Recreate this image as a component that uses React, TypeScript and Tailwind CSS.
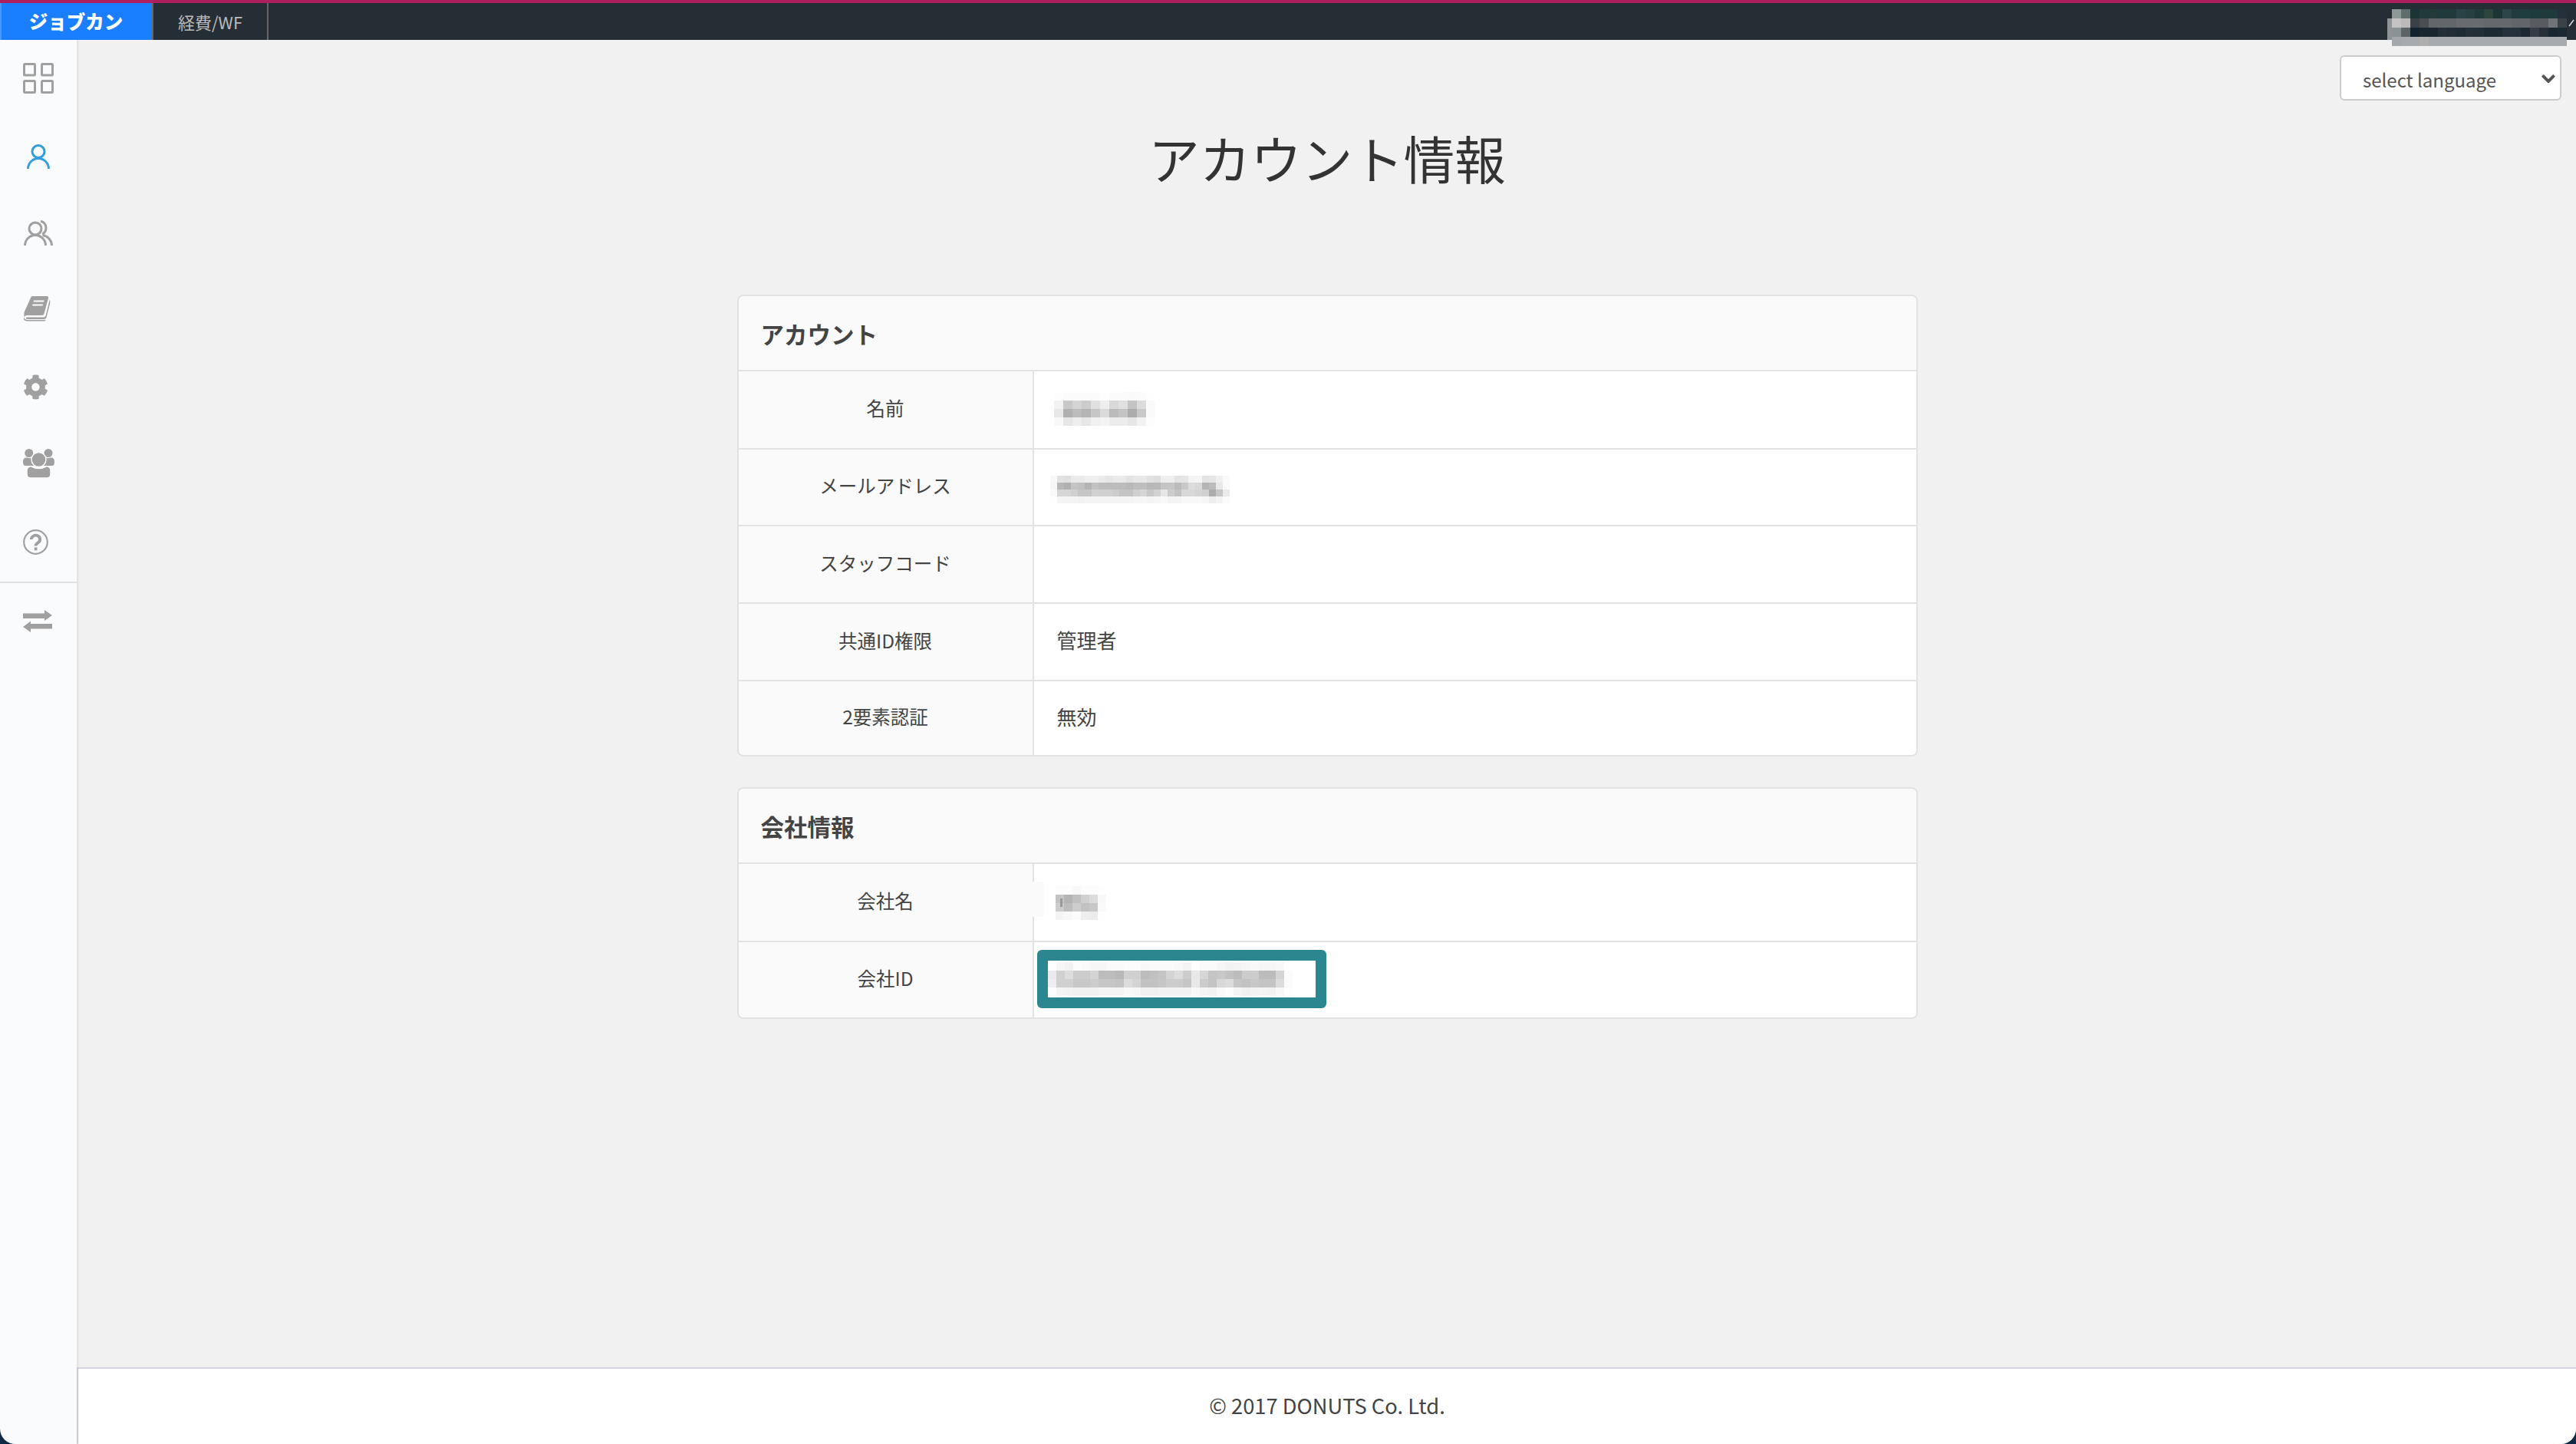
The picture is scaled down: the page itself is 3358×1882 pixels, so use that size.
import { ReactNode } from 'react'
import { FaCog } from 'react-icons/fa'

const gray = (v: string) => (v.length === 2 ? `#${v}${v}${v}` : `#${v}`)

// Pixelated blocks standing in for the blurred-out personal data
function Mosaic({ rows, cell, rowH, className, children }: { rows: string[]; cell: number; rowH: number; className?: string; children?: ReactNode }) {
  const grid = rows.map((r) => r.split(' '))
  const cols = Math.max(...grid.map((r) => r.length))
  return (
    <svg className={className} width={cols * cell} height={grid.length * rowH} shapeRendering="crispEdges">
      {grid.map((r, y) =>
        r.map((v, x) => <rect key={`${y}-${x}`} x={x * cell} y={y * rowH} width={cell} height={rowH} fill={gray(v)} />),
      )}
      {children}
    </svg>
  )
}

const nameBlocks = [
  'fd fb fb fb fb fe fb fb fa fb fe',
  'f2 c8 d4 cc e0 ee d8 e0 c4 dc fa',
  'e8 b0 bc b4 c6 da ba c4 ac c8 fa',
  'f8 e6 ee e6 f0 f4 ec ec e6 f2 fd',
]
const mailBlocks = [
  'f8 e2 e0 ea ea ee ee ea e6 ea ea e4 e8 e8 e2 de ee ee e4 e6 f4 f6 e4 e6 f0 fa',
  'f6 b8 b0 c4 c0 b4 c2 bc bc bc bc b8 be be b8 b8 c4 c6 bc c8 dc d8 b4 bc e8 fa',
  'fa d6 d6 d0 c6 c6 d2 d0 d0 cc c4 c4 d0 d6 c8 d2 e6 cc c2 d8 d8 d4 d0 ac c6 ea',
  'fe f4 f4 f4 f2 f4 f4 f4 f4 f4 f4 f4 f6 f6 f4 f6 f8 f4 f4 f8 f8 f8 f6 ee f4 fa',
]
const companyBlocks = ['fc fc f8 fc fc fe', 'c4 b4 c0 d0 dc f8', 'cc bc cc c2 c8 fa', 'f4 f8 fc ee ec fe']
const idBlocks = [
  'fe f6 f2 fc fa f6 f6 fa fa fc fc f8 fa fa fa f8 f4 fe fa fa f6 f2 f4 f6 f8 f6 f6 f8 ff',
  'ea d0 dc cc cc d4 bc bc b8 d0 d0 bc c0 c4 d4 dc cc e8 d6 c4 c8 c2 bc cc cc bc bc d4 fb',
  'ee d0 d0 c8 c8 cc c6 c6 c4 dc d4 c2 c2 c6 cc cc c6 e8 cc c4 d8 dc c6 c2 c8 c4 c4 dc fb',
  'fc f4 f2 f0 f0 f0 f4 f4 f4 f8 f6 f0 f0 f2 f2 f2 f2 f8 f4 f2 f8 fc f4 f0 f2 f4 f2 f8 fe',
]
const userBlocks = [
  '8e9896 5f6d6c 1c3436 1f3a3a 233b37 1e3a3a 1f3a3a 2a4245 26403f 1f3a3a 2c443d 1c3436 2a4648 223c3e 1f3c3e 1e3a3a 1e3a3a 1e3a3a 25303a',
  'c4c2c2 bababa 3a4248 4a4e50 62686a 62686a 62686a 686c6e 686c6e 686c6e 66696c 66696c 66696c 62666a 62666a 585c60 585c60 707478 3a4248',
  '8a9296 5c6468 13232b 1a262e 1a262e 252f37 222c34 1f2b32 252f37 242e36 1e2a32 1e2a32 26303a 26303a 1e2830 343c44 282f37 1a2630 1a2a30',
  'a4a8aa a8abad a8abad aeaeae a8abad a8abad a8abad a8abad a8abad a8abad a8abad a8abad a8abad a8abad a8abad a8abad a8abad a8abad a8abad',
]

function GridIcon() {
  return (
    <svg width="40" height="40" viewBox="0 0 40 40" fill="none" stroke="#a0a0a0" strokeWidth="3">
      <rect x="1.5" y="1.5" width="14" height="14.5" rx="1" />
      <rect x="24.5" y="1.5" width="14" height="14.5" rx="1" />
      <rect x="1.5" y="23.5" width="14" height="15" rx="1" />
      <rect x="24.5" y="23.5" width="14" height="15" rx="1" />
    </svg>
  )
}

function PersonIcon() {
  return (
    <svg width="30" height="32" viewBox="0 0 30 32" fill="none" stroke="#349ddb" strokeWidth="3" className="ml-[5px]">
      <circle cx="15" cy="9.5" r="8" />
      <path d="M1.5 32a13.5 13.5 0 0 1 27 0" />
    </svg>
  )
}

function PeopleIcon() {
  return (
    <svg width="38" height="33" viewBox="0 0 38 33" fill="none" stroke="#a0a0a0" strokeWidth="3" className="ml-px">
      <circle cx="15" cy="11" r="8" />
      <path d="M1.5 33a13.5 13.5 0 0 1 27 0" />
      <path d="M22 1.2a9 9 0 0 1 2 16.8" />
      <path d="M24.5 19.5a14 14 0 0 1 12 13.5" />
    </svg>
  )
}

function BookIcon() {
  return (
    <svg width="36" height="33" viewBox="0 0 36 33" fill="#a0a0a0">
      <path d="M10 2Q10.5 0 13 0H31Q33.5 0 33 2.500L27.500 23Q27 25 24.500 25H5Q3 25 1.500 27Q1 22 2 20Z" />
      <path d="M34.800 4.500 29.500 25.500Q29 27.500 26.500 27.500H6Q3.700 27.500 3.700 29Q3.700 30 6 30H27Q29.800 30 30.500 27.800L35.200 9.500Q35.800 7 34.800 4.500Z" />
      <path d="M1 27Q0 32 5 32.500H27Q29 32.500 30 31H6Q2 31 1 27Z" />
      <path fill="#fafbfd" d="M14 5.500H27.500L27 7.500H13.500ZM12.500 10.500H26L25.500 12.500H12Z" />
    </svg>
  )
}

function TeamIcon() {
  return (
    <svg width="41" height="38" viewBox="0 0 41 38" fill="#a0a0a0">
      <circle cx="7.800" cy="5.500" r="5.500" />
      <circle cx="33" cy="5.500" r="5.500" />
      <path d="M0 17Q0 11 5 11.500Q9 13 13 11.500L16 22H3Q0 22 0 17Z" />
      <path d="M41 17Q41 11 36 11.500Q32 13 28 11.500L25 22H38Q41 22 41 17Z" />
      <circle cx="20.500" cy="14" r="9.500" stroke="#fafbfd" strokeWidth="1.500" />
      <path d="M5 28Q5 24 10 22.500Q15 25.500 20.500 25.500Q26 25.500 31 22.500Q36 24 36 28V33Q36 38 31 38H10Q5 38 5 33Z" stroke="#fafbfd" strokeWidth="1.500" />
    </svg>
  )
}

function HelpIcon() {
  return (
    <svg width="33" height="33" viewBox="0 0 33 33" fill="none" stroke="#a0a0a0">
      <circle cx="16.500" cy="16.500" r="15.300" strokeWidth="2.200" />
      <path d="M10.800 13a5.700 5.200 0 1 1 9 4.200c-2 1.400-3.300 2-3.300 4.300" strokeWidth="3.800" />
      <rect x="14.700" y="23.500" width="3.800" height="3.800" fill="#a0a0a0" stroke="none" />
    </svg>
  )
}

function SwapIcon() {
  return (
    <svg width="38" height="29" viewBox="0 0 38 29" fill="#a0a0a0">
      <path d="M0 4.500H28V0L38 7 28 14V11H0Z" />
      <path d="M38 18H10V14.500L0 22 10 29V24.500H38Z" />
    </svg>
  )
}

const topItems: { icon: ReactNode; rowClass: string }[] = [
  { icon: <GridIcon />, rowClass: 'h-[100px]' },
  { icon: <PersonIcon />, rowClass: 'h-[104px]' },
  { icon: <PeopleIcon />, rowClass: 'h-[94px]' },
  { icon: <BookIcon />, rowClass: 'h-[104px]' },
  { icon: <FaCog size={33} color="#a0a0a0" />, rowClass: 'h-[100px]' },
  { icon: <TeamIcon />, rowClass: 'h-[100px]' },
  { icon: <HelpIcon />, rowClass: 'h-[104px]' },
]

function Sidebar() {
  return (
    <aside className="z-10 flex w-[100px] shrink-0 flex-col bg-[#fafbfd] shadow-[2px_0_3px_rgba(0,0,0,0.08)]">
      {topItems.map((item, i) => (
        <div key={i} className={`flex items-center pl-[30px] ${item.rowClass}`}>
          {item.icon}
        </div>
      ))}
      <div className="flex h-[100px] items-center border-t-2 border-[#e0e0e0] pl-[30px]">
        <SwapIcon />
      </div>
    </aside>
  )
}

function Header() {
  return (
    <header className="relative flex h-[52px] shrink-0 items-stretch border-t-4 border-[#ae1f5e] bg-[#262e35]">
      <div className="flex w-[200px] items-center justify-center border-r-2 border-l-2 border-r-[#666] border-l-[#4c96ff] bg-[#1a7fff] pr-[2px] text-[24.5px] font-black text-white">
        ジョブカン
      </div>
      <div className="flex w-[150px] items-center justify-center border-r-2 border-[#666] text-[22px] text-[#bbb]">
        経費/WF
      </div>
      <div className="absolute top-[20px] left-[3112px] z-20 h-[28px] w-[6px] bg-[#8f9496]" />
      <div className="absolute top-[8px] left-[3118px] z-20">
        <Mosaic rows={userBlocks} cell={12} rowH={12} />
      </div>
      <svg className="absolute top-[21px] right-[2px]" width="8" height="10" viewBox="0 0 8 10" fill="none" stroke="#d8d8d8" strokeWidth="1.500">
        <path d="M1 9 7 1" />
      </svg>
    </header>
  )
}

function Row({ label, className, last, children }: { label: string; className: string; last?: boolean; children?: ReactNode }) {
  return (
    <div className={`flex ${className} ${last ? '' : 'border-b-2 border-[#e2e2e2]'}`}>
      <div className="flex w-[385px] shrink-0 items-center justify-center border-r-2 border-[#e2e2e2] bg-[#fafafa] pb-[3px] text-[24.5px] text-[#444]">
        {label}
      </div>
      <div className="relative flex flex-1 items-center bg-white text-[26px] text-[#444]">{children}</div>
    </div>
  )
}

function Card({ title, children, className }: { title: string; children: ReactNode; className?: string }) {
  return (
    <section className={`w-[1539px] overflow-hidden rounded-[8px] border-2 border-[#e2e2e2] ${className ?? ''}`}>
      <h2 className="flex h-[98px] items-center border-b-2 border-[#e2e2e2] bg-[#fafafa] pt-[3px] pl-[29px] text-[30.500px] font-bold text-[#444]">
        {title}
      </h2>
      {children}
    </section>
  )
}

export default function App() {
  return (
    <div className="h-[1882px] w-[3358px] overflow-hidden bg-[#0f2a44] font-['Noto_Sans_CJK_JP','Noto_Sans',sans-serif]">
      <div className="flex h-full flex-col overflow-hidden rounded-b-[20px]">
        <Header />
        <div className="flex min-h-0 flex-1">
          <Sidebar />
          <main className="flex flex-1 flex-col bg-[#f1f1f1]">
            <div className="flex flex-1 flex-col items-center pl-[2px]">
              <div className="flex w-full justify-end pt-[20px] pr-[19px]">
                <div className="relative">
                  <select className="h-[59px] w-[289px] appearance-none rounded-[6px] border-2 border-[#ccc] bg-white pt-[4px] pl-[28px] text-[24px] text-[#555]">
                    <option>select language</option>
                  </select>
                  <svg className="pointer-events-none absolute top-[25px] right-[8px]" width="18" height="11" viewBox="0 0 18 11" fill="none" stroke="#555" strokeWidth="4">
                    <path d="M1.400 1.400 9 9 16.600 1.400" />
                  </svg>
                </div>
              </div>
              <h1 className="mt-[29px] h-[90px] text-[66.500px] leading-[90px] text-[#333]">アカウント情報</h1>
              <Card title="アカウント" className="mt-[134px]">
                <Row label="名前" className="h-[102px]">
                  <Mosaic rows={nameBlocks} cell={12} rowH={11} className="mb-[2px] ml-[26px]" />
                </Row>
                <Row label="メールアドレス" className="h-[100px]">
                  <Mosaic rows={mailBlocks} cell={9} rowH={9} className="mt-[6px] ml-[21px]" />
                </Row>
                <Row label="スタッフコード" className="h-[101px]" />
                <Row label="共通ID権限" className="h-[101px]">
                  <span className="ml-[30px] pb-[7px]">管理者</span>
                </Row>
                <Row label="2要素認証" className="h-[96px]" last>
                  <span className="ml-[30px] pb-[5px]">無効</span>
                </Row>
              </Card>
              <Card title="会社情報" className="mt-[40px]">
                <Row label="会社名" className="h-[102px]">
                  <div className="absolute top-[23px] left-[-2px] h-[46px] w-[15px] bg-[#fafafa]" />
                  <Mosaic rows={companyBlocks} cell={11} rowH={11} className="mt-[2px] ml-[28px]">
                    <rect x="6" y="16" width="3" height="11" fill="#999" />
                  </Mosaic>
                </Row>
                <Row label="会社ID" className="h-[98px]" last>
                  <div className="mb-[2px] ml-[4px] h-[76px] w-[377px] rounded-[6px] border-[14px] border-[#2b868f] bg-white">
                    <Mosaic rows={idBlocks} cell={11} rowH={11} className="mt-[2px]" />
                  </div>
                </Row>
              </Card>
            </div>
            <footer className="flex h-[100px] shrink-0 items-center justify-center border-t-2 border-l-2 border-t-[#d4d5e0] border-l-[#d4d5e0] bg-white pb-[4px] text-[27.300px] text-[#444]">
              © 2017 DONUTS Co. Ltd.
            </footer>
          </main>
        </div>
      </div>
    </div>
  )
}
